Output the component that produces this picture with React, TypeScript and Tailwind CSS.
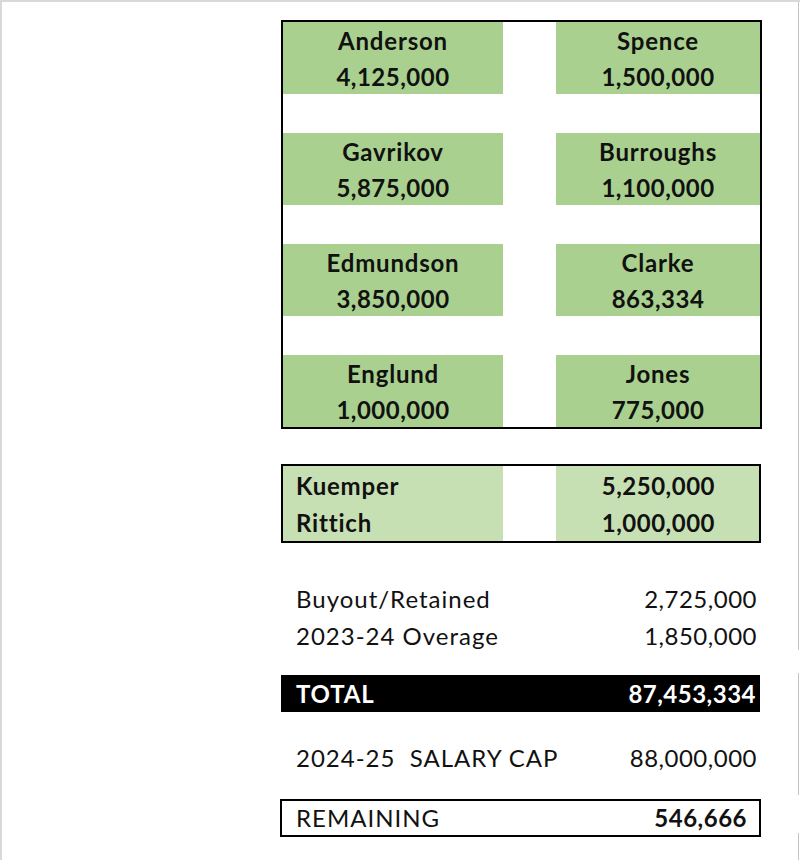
import React from "react";

const players: [string, string, string, string][] = [
  ["Anderson", "4,125,000", "Spence", "1,500,000"],
  ["Gavrikov", "5,875,000", "Burroughs", "1,100,000"],
  ["Edmundson", "3,850,000", "Clarke", "863,334"],
  ["Englund", "1,000,000", "Jones", "775,000"],
];

function Block({ name, amount }: { name: string; amount: string }) {
  return (
    <div className="h-[72px] bg-[#a9d08e] flex flex-col items-center text-[24px] leading-[37px] font-bold">
      <div className="tracking-[0.8px]">{name}</div>
      <div className="-mt-[1px] tracking-[0.5px]">{amount}</div>
    </div>
  );
}

export default function App() {
  return (
    <div
      className="w-[800px] h-[860px] bg-white flex border-t-2 border-l-2 border-[#d9d9d9] text-[#111] overflow-hidden"
      style={{ fontFamily: "Lato, 'Open Sans', sans-serif" }}
    >
      <div className="flex-1 pl-[279px] pt-[18px]">
        <div className="w-[481px]">
          {/* Skaters box */}
          <div className="border-2 border-black grid grid-cols-[220px_53px_204px] gap-y-[39px]">
            {players.map((p) => (
              <React.Fragment key={p[0]}>
                <Block name={p[0]} amount={p[1]} />
                <div />
                <Block name={p[2]} amount={p[3]} />
              </React.Fragment>
            ))}
          </div>

          {/* Goalies box */}
          <div className="mt-[35px] w-[480px] border-2 border-black grid grid-cols-[220px_53px_203px] text-[24px] leading-[37px] font-bold">
            <div className="bg-[#c6e0b4] pl-[13px] pt-[1px] tracking-[0.8px]">
              <div>Kuemper</div>
              <div>Rittich</div>
            </div>
            <div />
            <div className="bg-[#c6e0b4] pr-[44px] pt-[1px] text-right tracking-[0.5px]">
              <div>5,250,000</div>
              <div>1,000,000</div>
            </div>
          </div>

          {/* Other */}
          <div className="mt-[37px] pl-[15px] pr-[5px] text-[24px] leading-[37px]">
            <div className="flex justify-between">
              <span className="tracking-[1px]">Buyout/Retained</span>
              <span className="tracking-[0.5px]">2,725,000</span>
            </div>
            <div className="flex justify-between">
              <span className="tracking-[1px]">2023-24 Overage</span>
              <span className="tracking-[0.5px]">1,850,000</span>
            </div>
          </div>

          {/* Total */}
          <div className="mt-[21px] w-[479px] h-[37px] bg-black text-white flex justify-between pl-[15px] pr-[4px] text-[24px] leading-[37px] font-bold">
            <span className="tracking-[0.8px]">TOTAL</span>
            <span className="tracking-[0.5px]">87,453,334</span>
          </div>

          {/* Salary cap */}
          <div className="mt-[27px] flex justify-between pl-[15px] pr-[5px] text-[24px] leading-[37px]">
            <span className="tracking-[1px]">2024-25&nbsp;&nbsp;SALARY CAP</span>
            <span className="tracking-[0.5px]">88,000,000</span>
          </div>

          {/* Remaining */}
          <div className="mt-[23px] -ml-[1px] w-[481px] border-2 border-black flex justify-between pl-[14px] pr-[12px] text-[24px] leading-[34px]">
            <span className="tracking-[1px]">REMAINING</span>
            <span className="font-bold tracking-[0.5px]">546,666</span>
          </div>
        </div>
      </div>

      {/* right edge frame line */}
      <div className="w-[1px] mr-[1px] flex flex-col">
        <div className="h-[648px] bg-[#c4c4c4]" />
        <div className="h-[23px]" />
        <div className="h-[122px] bg-[#c4c4c4]" />
        <div className="h-[38px]" />
        <div className="flex-1 bg-[#c4c4c4]" />
      </div>
    </div>
  );
}
